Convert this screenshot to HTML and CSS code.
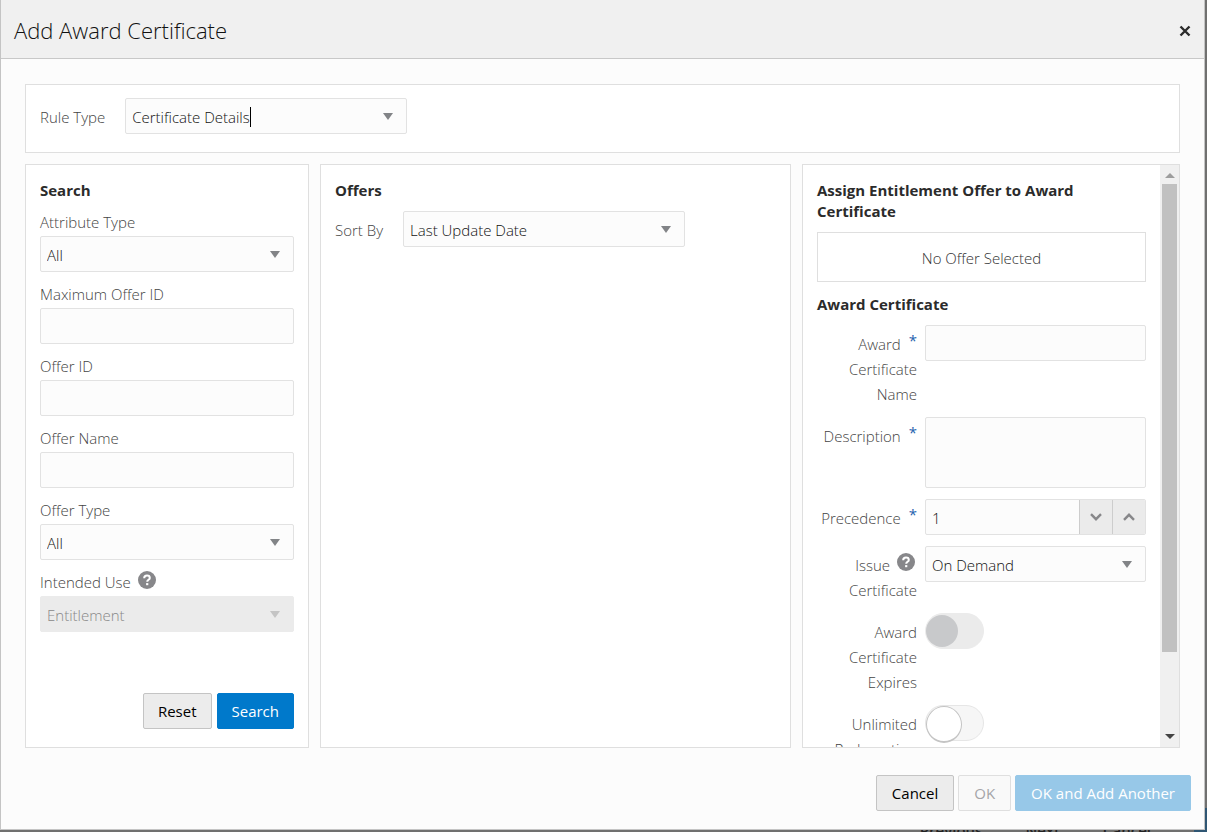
FILE: index.html
```html
<!DOCTYPE html>
<html lang="en">
<head>
<meta charset="utf-8">
<title>Add Award Certificate</title>
<link rel="stylesheet" href="styles.css">
</head>
<body>
<div class="underlay" aria-hidden="true">
  <span>Previous</span><span>Next</span><span>Cancel</span><span class="underlay-primary"></span>
</div>
<main class="dialog" role="dialog" aria-labelledby="dialog-title">
  <header class="dialog-header">
    <h1 class="dialog-title" id="dialog-title">Add Award Certificate</h1>
    <button class="close" type="button" aria-label="Close">
      <svg width="12" height="12" viewBox="0 0 12 12"><path d="M1.5 1.5 10.5 10.5M10.5 1.5 1.5 10.5" fill="none" stroke="#2b2b2b" stroke-width="2.4"/></svg>
    </button>
  </header>

  <div class="dialog-body">
    <section class="panel inline-row rule-row">
      <label class="label" for="rule-type">Rule Type</label>
      <div class="field combo wide">
        <input class="combo-input" id="rule-type" role="combobox" type="text" value="Certificate Details">
        <span class="caret"></span>
        <svg class="arrow" width="10" height="7" viewBox="0 0 10 7"><path d="M0 0H10L5 7Z"/></svg>
      </div>
    </section>

    <div class="columns">
      <section class="panel search-panel">
        <h2 class="heading">Search</h2>
        <form class="search-form">
          <div class="stack">
            <label class="label" for="attr-type">Attribute Type</label>
            <div class="field">
              <select class="control" id="attr-type"><option>All</option></select>
              <svg class="arrow" width="10" height="7" viewBox="0 0 10 7"><path d="M0 0H10L5 7Z"/></svg>
            </div>
          </div>
          <div class="stack">
            <label class="label" for="max-offer">Maximum Offer ID</label>
            <div class="field"><input class="control" id="max-offer" type="text"></div>
          </div>
          <div class="stack">
            <label class="label" for="offer-id">Offer ID</label>
            <div class="field"><input class="control" id="offer-id" type="text"></div>
          </div>
          <div class="stack">
            <label class="label" for="offer-name">Offer Name</label>
            <div class="field"><input class="control" id="offer-name" type="text"></div>
          </div>
          <div class="stack">
            <label class="label" for="offer-type">Offer Type</label>
            <div class="field">
              <select class="control" id="offer-type"><option>All</option></select>
              <svg class="arrow" width="10" height="7" viewBox="0 0 10 7"><path d="M0 0H10L5 7Z"/></svg>
            </div>
          </div>
          <div class="stack">
            <div class="label-row">
              <label class="label" for="intended-use">Intended Use</label>
              <svg class="help" width="18" height="18" viewBox="0 0 18 18"><circle cx="9" cy="9" r="9" fill="#87878a"/><path d="M6.2 7.2C6.2 5.4 7.4 4.5 9 4.5S11.8 5.4 11.8 6.9C11.8 8.8 9.2 8.8 9.2 10.8" fill="none" stroke="#fff" stroke-width="2"/><path d="M8.1 12.1H10.3V14.2H8.1Z" fill="#fff"/></svg>
            </div>
            <div class="field disabled">
              <select class="control" id="intended-use" disabled><option>Entitlement</option></select>
              <svg class="arrow" width="10" height="7" viewBox="0 0 10 7"><path d="M0 0H10L5 7Z"/></svg>
            </div>
          </div>
          <div class="actions">
            <button class="btn" type="button">Reset</button>
            <button class="btn primary" type="button">Search</button>
          </div>
        </form>
      </section>

      <section class="panel">
        <h2 class="heading">Offers</h2>
        <div class="inline-row">
          <label class="label" for="sort-by">Sort By</label>
          <div class="field wide">
            <select class="control" id="sort-by"><option>Last Update Date</option></select>
            <svg class="arrow" width="10" height="7" viewBox="0 0 10 7"><path d="M0 0H10L5 7Z"/></svg>
          </div>
        </div>
      </section>

      <section class="panel scroll-panel">
        <div class="scroll-content">
          <h2 class="heading">Assign Entitlement Offer to Award Certificate</h2>
          <p class="empty">No Offer Selected</p>
          <h2 class="heading">Award Certificate</h2>
          <form class="award-form">
            <div class="award-row">
              <label class="award-label" for="cert-name"><span class="required">*</span>Award Certificate Name</label>
              <div class="award-value"><div class="field"><input class="control" id="cert-name" type="text"></div></div>
            </div>
            <div class="award-row">
              <label class="award-label" for="description"><span class="required">*</span>Description</label>
              <div class="award-value"><div class="field area"><textarea class="control" id="description"></textarea></div></div>
            </div>
            <div class="award-row">
              <label class="award-label" for="precedence"><span class="required">*</span>Precedence</label>
              <div class="award-value">
                <div class="field spinner">
                  <input class="control" id="precedence" type="text" value="1">
                  <button class="step" type="button" aria-label="Decrease"><svg width="12" height="8" viewBox="0 0 12 8"><path d="M1 1.2 6 6.2 11 1.2"/></svg></button>
                  <button class="step" type="button" aria-label="Increase"><svg width="12" height="8" viewBox="0 0 12 8"><path d="M1 6.8 6 1.8 11 6.8"/></svg></button>
                </div>
              </div>
            </div>
            <div class="award-row">
              <label class="award-label" for="issue"><svg class="help float" width="18" height="18" viewBox="0 0 18 18"><circle cx="9" cy="9" r="9" fill="#87878a"/><path d="M6.2 7.2C6.2 5.4 7.4 4.5 9 4.5S11.8 5.4 11.8 6.9C11.8 8.8 9.2 8.8 9.2 10.8" fill="none" stroke="#fff" stroke-width="2"/><path d="M8.1 12.1H10.3V14.2H8.1Z" fill="#fff"/></svg>Issue Certificate</label>
              <div class="award-value">
                <div class="field">
                  <select class="control" id="issue"><option>On Demand</option></select>
                  <svg class="arrow" width="10" height="7" viewBox="0 0 10 7"><path d="M0 0H10L5 7Z"/></svg>
                </div>
              </div>
            </div>
            <div class="award-row">
              <label class="award-label" for="expires">Award Certificate Expires</label>
              <div class="award-value"><input class="switch" id="expires" type="checkbox" role="switch" disabled></div>
            </div>
            <div class="award-row">
              <label class="award-label" for="unlimited">Unlimited Redemption</label>
              <div class="award-value"><input class="switch" id="unlimited" type="checkbox" role="switch"></div>
            </div>
          </form>
        </div>
        <div class="scrollbar" aria-hidden="true">
          <svg width="10" height="5" viewBox="0 0 10 5"><path d="M0 5 5 0 10 5Z" fill="#9d9d9d"/></svg>
          <div class="track"><div class="thumb"></div></div>
          <svg width="10" height="5" viewBox="0 0 10 5"><path d="M0 0 5 5 10 0Z" fill="#444"/></svg>
        </div>
      </section>
    </div>
  </div>

  <footer class="dialog-footer">
    <button class="btn" type="button">Cancel</button>
    <button class="btn" type="button" disabled>OK</button>
    <button class="btn primary" type="button" disabled>OK and Add Another</button>
  </footer>
</main>
</body>
</html>
```
FILE: styles.css
```css
* { box-sizing: border-box; }

body {
  margin: 0;
  height: 100vh;
  overflow: hidden;
  background: #70706f;
  color: #111;
  font: 300 15px/25px "Open Sans", "Noto Sans", sans-serif;
}

button, input, select, textarea { font: inherit; color: inherit; }

.underlay {
  position: absolute;
  right: 0;
  bottom: -8px;
  display: flex;
  gap: 43px;
  font-size: 15px;
  font-weight: 600;
  color: #222;
  line-height: 20px;
}
.underlay-primary { width: 13px; height: 32px; margin-top: -12px; background: #2f5673; }

.dialog {
  position: relative;
  display: flex;
  flex-direction: column;
  height: calc(100vh - 2px);
  margin-right: 2px;
  border: 1px solid #c4c4c4;
  border-top: 0;
  background: #fcfcfc;
}

.dialog-header {
  display: flex;
  align-items: center;
  justify-content: space-between;
  height: 59px;
  padding: 2px 13px 0;
  border-bottom: 1px solid #c8c8c8;
  background: #f0f0f0;
}
.dialog-title { margin: 0; font-size: 22px; font-weight: 300; line-height: 30px; color: #111; }
.close { display: flex; padding: 0; border: 0; background: none; margin-top: 2px; }

.dialog-body {
  flex: 1;
  min-height: 0;
  display: flex;
  flex-direction: column;
  gap: 11px;
  padding: 25px 24px 0;
}

.panel { padding: 15px 14px 18px; border: 1px solid #dfdfdf; background: #fff; min-width: 0; }
.rule-row.panel { padding: 13px 14px 18px; }
.columns { flex: 1; min-height: 0; display: grid; grid-template-columns: 284fr 471fr 378fr; gap: 11px; }

.heading { margin: 0 0 10px; font-size: 15px; font-weight: 700; line-height: 21px; color: #2b2b2b; }
.label { color: #444; white-space: nowrap; }
.inline-row { display: flex; align-items: center; gap: 20px; }
.inline-row .label { padding-top: 3px; }

.field {
  position: relative;
  display: flex;
  height: 36px;
  border: 1px solid #e2e2e2;
  border-radius: 2px;
  background: #fcfcfc;
}
.wide { width: 282px; }
.area { height: 71px; }
.control {
  flex: 1;
  width: 100%;
  min-width: 0;
  padding: 2px 6px 0;
  border: 0;
  background: none;
  appearance: none;
  outline: 0;
  resize: none;
  opacity: 1;
}
.arrow { position: absolute; right: 13px; top: 14px; fill: #828487; pointer-events: none; }
.combo { align-items: center; padding: 2px 6px 0; }
.combo .arrow { right: 13px; }
.combo-input { field-sizing: content; min-width: 0; padding: 0; border: 0; outline: 0; background: none; }
.caret { width: 1px; height: 20px; background: #000; }
.disabled { border-color: #ebebeb; background: #ebebeb; color: #888; }
.disabled .arrow { fill: #c4c4c4; }

.search-panel { display: flex; flex-direction: column; }
.search-form { flex: 1; display: flex; flex-direction: column; gap: 11px; }
.stack { display: flex; flex-direction: column; }
.stack .label { line-height: 23px; padding-bottom: 2px; }
.label-row { display: flex; gap: 7px; }
.actions { display: flex; justify-content: flex-end; gap: 5px; margin-top: auto; }

.btn {
  height: 36px;
  padding: 1px 15px 0;
  border: 1px solid #c4c4c4;
  border-radius: 2px;
  background: #ececec;
  color: #000;
  font-weight: 400;
}
.actions .btn { padding: 1px 14px 0; }
.btn:disabled { border-color: #dfdfdf; background: #f9f9f9; color: #a5a5a8; }
.primary { border-color: #0079cb; background: #0079cb; color: #fff; }
.primary:disabled { border-color: #97c8e8; background: #97c8e8; color: #fff; }

.scroll-panel { display: flex; min-height: 0; padding: 0; }
.scroll-content { flex: 1; min-width: 0; overflow: hidden; padding: 15px 14px 0; }
.empty {
  margin: 0 0 12px;
  padding: 13px 0 10px;
  border: 1px solid #dfdfdf;
  text-align: center;
  color: #333;
}
.award-form { display: flex; flex-direction: column; gap: 10px; }
.award-row { display: grid; grid-template-columns: 100px 1fr; gap: 8px; }
.award-label { padding-top: 7px; text-align: right; color: #444; }
.award-value { padding-bottom: 1px; }
.required { float: right; margin-left: 8px; color: #1f62ae; line-height: 16px; font-size: 15px; font-weight: 400; }
.float { float: right; margin: 0 2px 0 7px; }
.spinner { overflow: hidden; }
.step {
  flex: none;
  display: flex;
  align-items: center;
  justify-content: center;
  width: 33px;
  padding: 0;
  border: 0;
  border-left: 1px solid #cdcdcd;
  background: #ebebeb;
}
.step path { fill: none; stroke: #87878a; stroke-width: 2.4; }

.switch {
  display: block;
  appearance: none;
  width: 59px;
  height: 36px;
  margin: 0;
  border: 1px solid #e6e6e6;
  border-radius: 18px;
  background: #f6f6f6;
}
.switch::before {
  content: "";
  display: block;
  width: 34px;
  height: 34px;
  border: 1px solid #c4c4c4;
  border-bottom-width: 2px;
  border-radius: 50%;
  background: #fff;
}
.switch:disabled { padding: 1px 0; border-color: #ebebeb; background: #ebebeb; }
.switch:disabled::before { width: 32px; height: 32px; border: 0; background: #c8c9cb; }

.scrollbar {
  width: 19px;
  display: flex;
  flex-direction: column;
  align-items: center;
  gap: 6px;
  padding: 8px 0;
  background: #f0f0f0;
}
.track { flex: 1; width: 15px; }
.thumb { height: 86%; background: #c1c1c1; }

.dialog-footer { display: flex; justify-content: flex-end; gap: 4px; padding: 27px 13px 18px; }
```
